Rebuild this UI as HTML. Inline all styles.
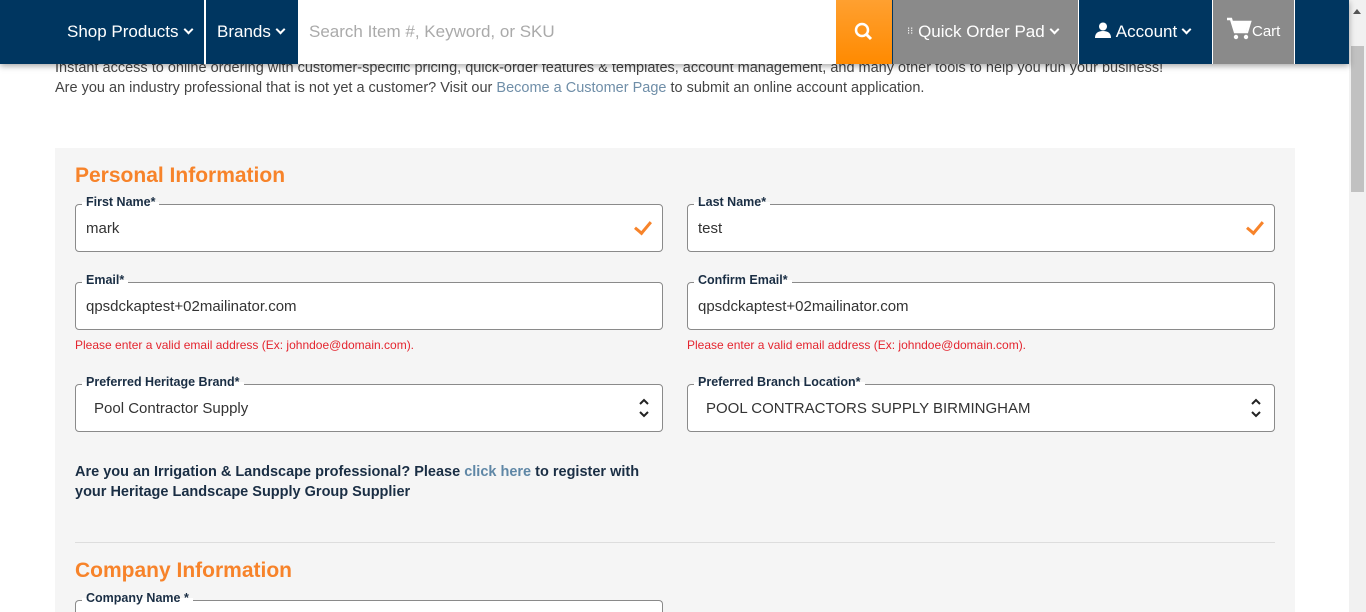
<!DOCTYPE html>
<html style="width:1366px;height:612px;overflow:hidden"><head><style>
*{box-sizing:border-box;margin:0;padding:0}
body{width:1366px;height:612px;overflow:hidden;background:#fff;font-family:"Liberation Sans",sans-serif;position:relative}
.nav{position:absolute;left:0;top:0;width:1349px;height:64px;background:#003660;box-shadow:0 2px 6px rgba(0,0,0,.35);z-index:5}
.ni{position:absolute;top:0;height:64px;color:#fff;font-size:17px;line-height:64px;white-space:nowrap}
.chev{display:inline-block;width:7px;height:7px;border-right:2px solid #fff;border-bottom:2px solid #fff;transform:rotate(45deg);margin-left:6px;position:relative;top:-4px}
.intro{position:absolute;left:55px;top:58px;font-size:14.5px;color:#444;line-height:20px}
.intro a{color:#6f8ea8;text-decoration:none}
.panel{position:absolute;left:55px;top:148px;width:1240px;height:464px;background:#f5f5f5}
h2{position:absolute;color:#f7832a;font-size:21px;font-weight:bold}
.f{position:absolute;width:588px;height:48px;border:1px solid #8a8a8a;border-radius:4px;background:#fff;font-size:15px;color:#333;padding:0 0 0 10px;line-height:48px}
.f label{position:absolute;left:6px;top:-11px;padding:0 4px;font-size:12.5px;font-weight:bold;color:#1a2e44;line-height:16px;background:linear-gradient(#f5f5f5 50%,#fff 50%)}
.chk{position:absolute;right:14px;top:13px;width:10px;height:16px;border-right:3px solid #f7832a;border-bottom:3px solid #f7832a;transform:rotate(40deg)}
.err{position:absolute;font-size:12px;color:#e4252f}
.sel{position:absolute;right:12px;top:12px}
</style></head><body>
<div class="nav">
 <div class="ni" style="left:55px;width:149px;padding-left:12px">Shop Products<span class="chev"></span></div>
 <div style="position:absolute;left:204px;top:0;width:2px;height:64px;background:#fff"></div>
 <div class="ni" style="left:206px;width:92px;padding-left:11px">Brands<span class="chev"></span></div>
 <div class="ni" style="left:298px;width:538px;background:#fff;color:#aaa;padding-left:11px">Search Item #, Keyword, or SKU</div>
 <div class="ni" style="left:836px;width:56px;background:linear-gradient(#ffa030,#ff8a00)"><svg width="56" height="64"><circle cx="26" cy="30" r="6" stroke="#fff" stroke-width="2.5" fill="none"/><line x1="30" y1="34" x2="35" y2="39" stroke="#fff" stroke-width="3"/></svg></div>
 <div class="ni" style="left:893px;width:185px;background:#8a8a8a;padding-left:14px"><span style="font-size:10px;position:relative;top:-3px">⁝⁝</span> Quick Order Pad<span class="chev"></span></div>
 <div class="ni" style="left:1078px;width:1px;background:#fff"></div>
 <div class="ni" style="left:1079px;width:133px;padding-left:15px"><svg width="18" height="16" style="vertical-align:-1px"><circle cx="9" cy="4.5" r="4" fill="#fff"/><path d="M1 16 Q1 9 9 9 Q17 9 17 16Z" fill="#fff"/></svg> Account<span class="chev"></span></div>
 <div class="ni" style="left:1212px;width:1px;background:#fff"></div>
 <div class="ni" style="left:1213px;width:81px;background:#8a8a8a;padding-left:13px;font-size:15px"><svg width="26" height="24" style="vertical-align:-5px"><path d="M1 2h4l4 13h12l3-10H7" stroke="#fff" stroke-width="2.5" fill="none"/><path d="M7 6h16l-3 8H9z" fill="#fff"/><circle cx="10" cy="20" r="2.2" fill="#fff"/><circle cx="20" cy="20" r="2.2" fill="#fff"/></svg>Cart</div>
 <div style="position:absolute;left:1294px;top:0;width:1px;height:64px;background:#fff"></div>
</div>
<div style="position:absolute;left:1349px;top:0;width:17px;height:612px;background:#f1f1f1"></div>
<div style="position:absolute;left:1351px;top:46px;width:13px;height:146px;background:#c1c1c1"></div>
<div style="position:absolute;left:1353px;top:5px;width:0;height:0;border:4px solid transparent;border-bottom:5px solid #555"></div>
<div class="intro">Instant access to online ordering with customer-specific pricing, quick-order features &amp; templates, account management, and many other tools to help you run your business!<br>Are you an industry professional that is not yet a customer? Visit our <a>Become a Customer Page</a> to submit an online account application.</div>
<div class="panel"></div>
<h2 style="left:75px;top:164px">Personal Information</h2>
<div class="f" style="left:75px;top:204px"><label>First Name*</label>mark<div class="chk"></div></div>
<div class="f" style="left:687px;top:204px"><label>Last Name*</label>test<div class="chk"></div></div>
<div class="f" style="left:75px;top:282px"><label>Email*</label>qpsdckaptest+02mailinator.com</div>
<div class="f" style="left:687px;top:282px"><label>Confirm Email*</label>qpsdckaptest+02mailinator.com</div>
<div class="err" style="left:75px;top:338px">Please enter a valid email address (Ex: johndoe@domain.com).</div>
<div class="err" style="left:687px;top:338px">Please enter a valid email address (Ex: johndoe@domain.com).</div>
<div class="f" style="left:75px;top:384px;padding-left:18px"><label>Preferred Heritage Brand*</label>Pool Contractor Supply<svg class="sel" width="12" height="22"><path d="M2 7l4-4 4 4M2 15l4 4 4-4" stroke="#222" stroke-width="2" fill="none"/></svg></div>
<div class="f" style="left:687px;top:384px;padding-left:18px"><label>Preferred Branch Location*</label>POOL CONTRACTORS SUPPLY BIRMINGHAM<svg class="sel" width="12" height="22"><path d="M2 7l4-4 4 4M2 15l4 4 4-4" stroke="#222" stroke-width="2" fill="none"/></svg></div>
<div style="position:absolute;left:75px;top:462px;font-size:14.5px;font-weight:bold;color:#1a2e44;line-height:20px">Are you an Irrigation &amp; Landscape professional? Please <span style="color:#5f87a6">click here</span> to register with<br>your Heritage Landscape Supply Group Supplier</div>
<div style="position:absolute;left:75px;top:542px;width:1200px;height:1px;background:#ddd"></div>
<h2 style="left:75px;top:559px">Company Information</h2>
<div class="f" style="left:75px;top:600px;height:12px;border-bottom:none;border-radius:4px 4px 0 0"><label>Company Name *</label></div>
</body></html>
